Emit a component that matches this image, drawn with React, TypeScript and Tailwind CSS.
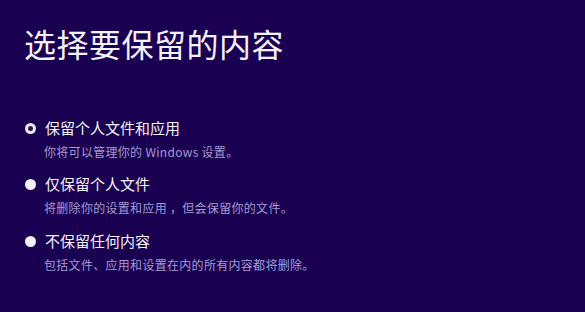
const options = [
  { label: "保留个人文件和应用", hint: "你将可以管理你的 Windows 设置。", selected: true },
  { label: "仅保留个人文件", hint: "将删除你的设置和应用 ，但会保留你的文件。", selected: false },
  { label: "不保留任何内容", hint: "包括文件、应用和设置在内的所有内容都将删除。", selected: false },
];

function Radio({ selected }: { selected: boolean }) {
  if (selected) {
    return (
      <span className="flex h-[11px] w-[11px] items-center justify-center rounded-full bg-[#eeeaf6]">
        <span className="h-[5px] w-[5px] rounded-full bg-[#2a1a4a]" />
      </span>
    );
  }
  return <span className="h-[11px] w-[11px] rounded-full bg-[#f2f0f8]" />;
}

export default function App() {
  return (
    <div
      className="h-[312px] w-[585px] overflow-hidden bg-[#1a0051] pl-6"
      style={{ fontFamily: '"Noto Sans CJK SC", "Noto Sans", sans-serif' }}
    >
      <h1 className="pt-[27px] text-[32px] leading-[32px] tracking-[0.5px] text-[#f3f1fa]">
        选择要保留的内容
      </h1>
      <div className="mt-[59px] flex flex-col gap-[14px]">
        {options.map((o, i) => (
          <div key={o.label} className={i === 2 ? "pt-[1px]" : ""}>
            <div className="flex items-center gap-[9px] pl-[1px]">
              <Radio selected={o.selected} />
              <span className="text-[15px] leading-[20px] text-[#f4f2fa]">{o.label}</span>
            </div>
            <p className="mt-[6px] pl-[20px] text-[12px] leading-[16px] tracking-[0.3px] text-[#a59bd6]">
              {o.hint}
            </p>
          </div>
        ))}
      </div>
    </div>
  );
}
